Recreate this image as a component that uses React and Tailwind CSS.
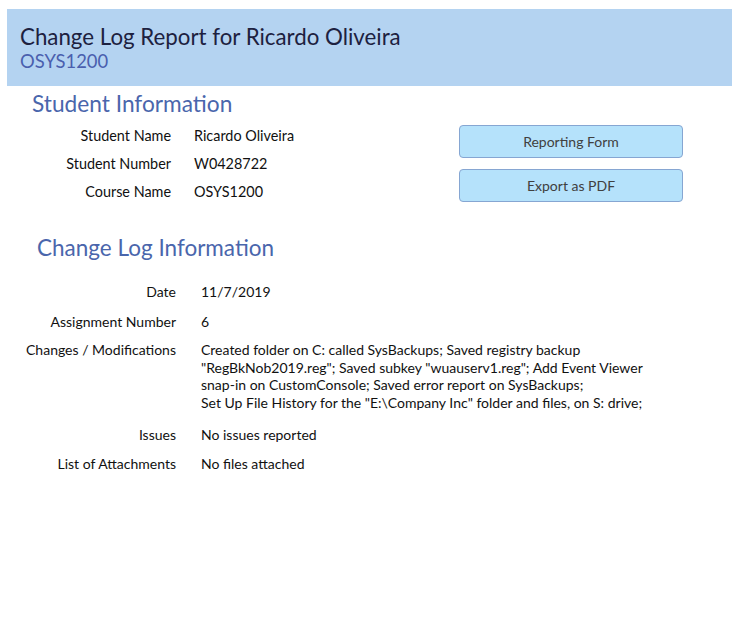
const studentRows = [
  { label: "Student Name", value: "Ricardo Oliveira" },
  { label: "Student Number", value: "W0428722" },
  { label: "Course Name", value: "OSYS1200" },
];

const changeLines = [
  "Created folder on C: called SysBackups; Saved registry backup",
  "\"RegBkNob2019.reg\"; Saved subkey \"wuauserv1.reg\"; Add Event Viewer",
  "snap-in on CustomConsole; Saved error report on SysBackups;",
  "Set Up File History for the \"E:\\Company Inc\" folder and files, on S: drive;",
];

const App = () => {
  return (
    <div
      className="w-[751px] h-[627px] bg-white text-[#111] overflow-hidden"
      style={{ fontFamily: "Lato, 'Open Sans', sans-serif" }}
    >
      {/* header band */}
      <div className="ml-[7px] mt-[9px] w-[725px] h-[77px] bg-[#b4d3f1] pl-[13px] pt-[13px]">
        <h1 className="text-[22.3px] leading-[29px] text-[#1d2140]">
          Change Log Report for Ricardo Oliveira
        </h1>
        <div className="text-[18.4px] leading-[20px] text-[#4a5fae]">OSYS1200</div>
      </div>

      {/* student info */}
      <div className="flex">
        <div className="w-[452px]">
          <h2 className="ml-[32px] mt-[4px] text-[22.7px] leading-[28px] text-[#4a66ac]">
            Student Information
          </h2>
          <div className="mt-[4px] flex flex-col">
            {studentRows.map((row) => (
              <div key={row.label} className="flex h-[28px] items-center text-[14.4px]">
                <span className="w-[171px] text-right">{row.label}</span>
                <span className="ml-[23px]">{row.value}</span>
              </div>
            ))}
          </div>
        </div>
        <div className="ml-[7px] mt-[39px] flex flex-col gap-[11px]">
          <button className="w-[224px] h-[33px] rounded-[4px] border border-[#86a6d2] bg-[#b5e2fb] text-[14px] text-[#404040]">
            Reporting Form
          </button>
          <button className="w-[224px] h-[33px] rounded-[4px] border border-[#86a6d2] bg-[#b5e2fb] text-[14px] text-[#404040]">
            Export as PDF
          </button>
        </div>
      </div>

      {/* change log */}
      <h2 className="ml-[37px] mt-[28px] text-[22.5px] leading-[28px] text-[#4a66ac]">
        Change Log Information
      </h2>
      <div className="mt-[14px] flex flex-col text-[14px]">
        <div className="flex h-[30px] items-center">
          <span className="w-[176px] text-right">Date</span>
          <span className="ml-[25px]">11/7/2019</span>
        </div>
        <div className="flex h-[30px] items-center">
          <span className="w-[176px] text-right">Assignment Number</span>
          <span className="ml-[25px]">6</span>
        </div>
        <div className="flex pt-[5px] leading-[17.7px]">
          <span className="w-[176px] text-right">Changes / Modifications</span>
          <div className="ml-[25px] flex flex-col">
            {changeLines.map((line) => (
              <span key={line}>{line}</span>
            ))}
          </div>
        </div>
        <div className="mt-[8px] flex h-[30px] items-center">
          <span className="w-[176px] text-right">Issues</span>
          <span className="ml-[25px]">No issues reported</span>
        </div>
        <div className="flex h-[28px] items-center">
          <span className="w-[176px] text-right">List of Attachments</span>
          <span className="ml-[25px]">No files attached</span>
        </div>
      </div>
    </div>
  );
};

export default App;
